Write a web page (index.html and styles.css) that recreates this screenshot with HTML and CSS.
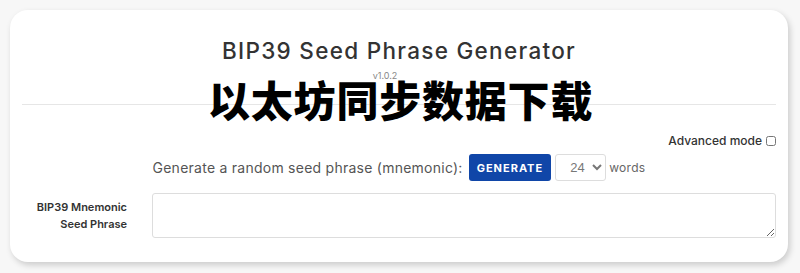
FILE: index.html
```html
<!DOCTYPE html>
<html lang="en">
<head>
    <meta charset="UTF-8">
    <meta name="viewport" content="width=device-width, initial-scale=1.0">
    <title>BIP39 Seed Phrase Generator</title>
    <link rel="stylesheet" href="styles.css">
</head>
<body>
    <div class="card">
        <div class="header">
            <h1 class="title">BIP39 Seed Phrase Generator</h1>
            <div class="version">v1.0.2</div>
        </div>
        <div class="banner">以太坊同步数据下载</div>

        <div class="advanced">
            <label for="advanced">Advanced mode</label>
            <input type="checkbox" id="advanced">
        </div>

        <div class="generate-row">
            <span class="generate-text">Generate a random seed phrase (mnemonic):</span>
            <button class="btn">GENERATE</button>
            <select class="words-select">
                <option>12</option>
                <option>15</option>
                <option>18</option>
                <option>21</option>
                <option selected>24</option>
            </select>
            <span class="words-text">words</span>
        </div>

        <div class="field-row">
            <label class="field-label" for="phrase">BIP39 Mnemonic<br>Seed Phrase</label>
            <textarea id="phrase" class="phrase"></textarea>
        </div>
    </div>
</body>
</html>
```

FILE: styles.css
```css
body {
    margin: 0;
    padding: 10px 12px 11px 10px;
    background-color: #f7f7f7;
    font-family: Inter, "Open Sans", sans-serif;
}
.card {
    position: relative;
    height: 252px;
    box-sizing: border-box;
    padding: 0 12px;
    background-color: #fff;
    border-radius: 18px;
    box-shadow: 2px 3px 6px rgba(0, 0, 0, 0.18);
}
.header {
    text-align: center;
    padding-top: 26px;
    height: 68px;
    border-bottom: 1px solid #e6e6e6;
}
.title {
    margin: 0;
    font-size: 22.5px;
    font-weight: 500;
    color: #333;
    line-height: 30px;
    letter-spacing: 1.3px;
}
.version {
    font-size: 9px;
    color: #888;
    margin-top: 4px;
    margin-left: -28px;
}
.banner {
    position: absolute;
    left: 198px;
    top: 58px;
    font-family: "Noto Sans CJK SC", sans-serif;
    font-size: 42px;
    font-weight: 900;
    color: #000;
    letter-spacing: 0.8px;
}
.advanced {
    display: flex;
    justify-content: flex-end;
    align-items: center;
    gap: 4px;
    margin-top: 28px;
    font-size: 12px;
    font-weight: 500;
    color: #333;
}
.advanced input {
    margin: 0;
    width: 10px;
    height: 10px;
}
.generate-row {
    display: flex;
    justify-content: center;
    align-items: center;
    margin-top: 6px;
    height: 27px;
    font-size: 14px;
    color: #555;
}
.generate-text {
    margin-right: 6px;
    letter-spacing: 0.25px;
}
.btn {
    height: 27px;
    padding: 0 8px;
    border: none;
    border-radius: 3px;
    background-color: #1046a8;
    color: #fff;
    font-family: Inter, sans-serif;
    font-size: 11px;
    font-weight: 700;
    letter-spacing: 1px;
    cursor: pointer;
}
.words-select {
    margin-left: 4px;
    width: 51px;
    height: 27px;
    border: 1px solid #ddd;
    border-radius: 3px;
    background: #fff;
    color: #777;
    font-size: 13px;
    padding-left: 10px;
}
.words-text {
    margin-left: 3px;
    font-size: 12px;
    color: #666;
    letter-spacing: 0.3px;
}
.field-row {
    display: flex;
    align-items: center;
    gap: 25px;
    margin-top: 12px;
}
.field-label {
    width: 105px;
    text-align: right;
    font-size: 11px;
    font-weight: 600;
    line-height: 17px;
    color: #333;
}
.phrase {
    flex: 1;
    height: 45px;
    box-sizing: border-box;
    border: 1px solid #ddd;
    border-radius: 3px;
    resize: vertical;
}
```
